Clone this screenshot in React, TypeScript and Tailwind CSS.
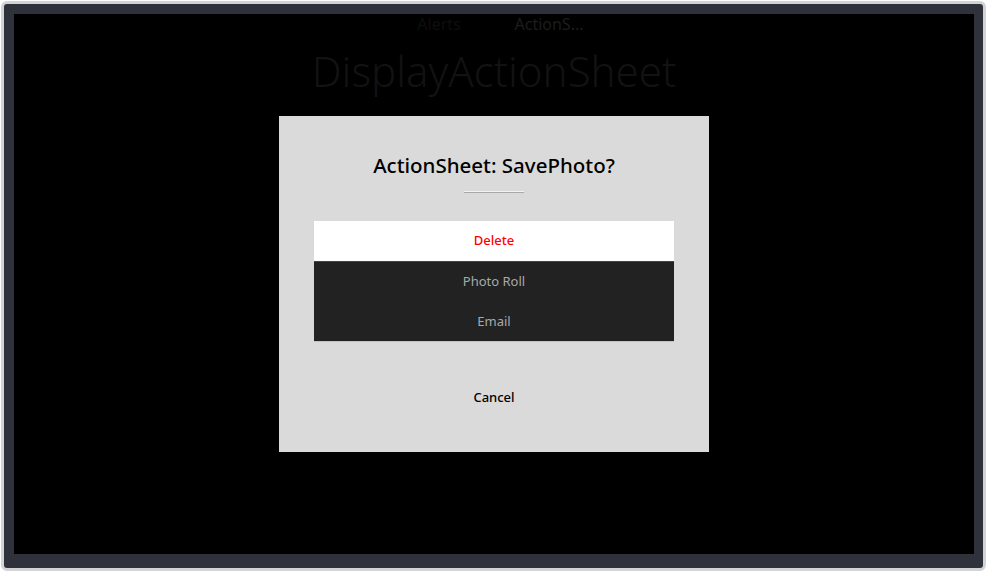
const font = { fontFamily: '"Noto Sans", "Open Sans", sans-serif' };

const actions = [
  { label: "Delete", destructive: true },
  { label: "Photo Roll", destructive: false },
  { label: "Email", destructive: false },
];

export default function App() {
  return (
    <div className="h-[572px] w-[987px] bg-white p-px" style={font}>
      <div className="h-[570px] w-[985px] rounded-[6px] border-[3px] border-[#d2d3d6] bg-[#2f323a] pt-[10px] pb-[13px] pl-[10px] pr-[10px]">
        <div className="relative h-[540px] w-[960px] bg-black">
          {/* page behind the sheet */}
          <div className="flex h-[20px] items-center justify-center text-[16px] leading-none">
            <span className="w-[110px] text-center text-[#0e0e0e]">Alerts</span>
            <span className="w-[110px] text-center text-[#1d1d1d]">ActionS...</span>
          </div>
          <div className="mt-[13px] text-center text-[42px] font-light leading-[48px] text-[#121212]">
            DisplayActionSheet
          </div>

          {/* action sheet dialog */}
          <div className="absolute left-[265px] top-[102px] flex h-[336px] w-[430px] flex-col items-center bg-[#dadada]">
            <h2 className="mt-[35px] text-[20.5px] font-medium leading-[28px] text-black">
              ActionSheet: SavePhoto?
            </h2>
            <div className="mt-[12px] h-[2px] w-[60px] border-b border-[#a9a9a9] bg-[#f2f2f2]" />
            <div className="mt-[28px] flex w-[360px] flex-col border-b border-[#c2c2c2]">
              {actions.map((a) =>
                a.destructive ? (
                  <button
                    key={a.label}
                    className="h-[41px] border-b border-[#444] bg-white text-[13px] font-medium text-[#ff0000]"
                  >
                    {a.label}
                  </button>
                ) : (
                  <button key={a.label} className="h-[39.5px] bg-[#222222] text-[13px] text-[#a9a9a9]">
                    {a.label}
                  </button>
                )
              )}
            </div>
            <button className="mt-[46px] text-[13px] font-medium text-black">Cancel</button>
          </div>
        </div>
      </div>
    </div>
  );
}
